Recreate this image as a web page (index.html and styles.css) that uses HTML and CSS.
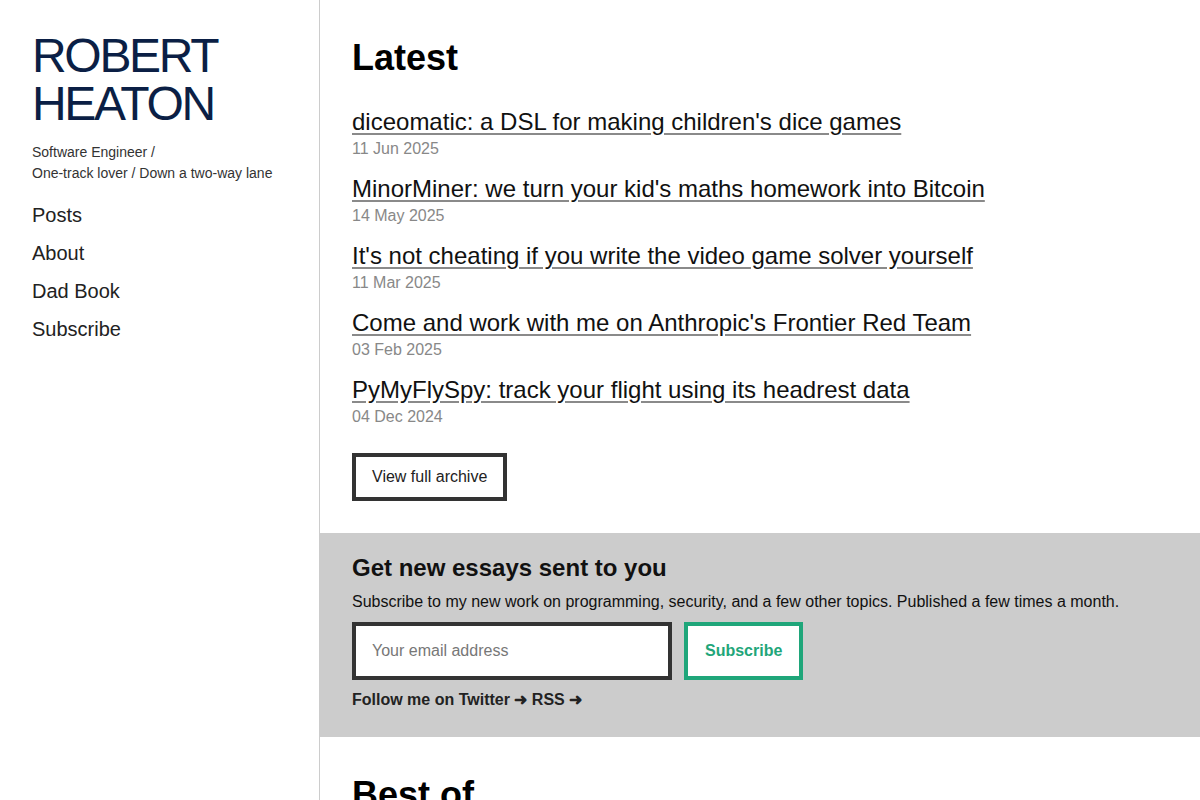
FILE: index.html
```html
<!DOCTYPE html>
<html lang="en">
<head>
    <meta charset="UTF-8">
    <meta name="viewport" content="width=device-width, initial-scale=1.0">
    <title>Robert Heaton</title>
    <link rel="stylesheet" href="styles.css">
</head>
<body>
    <div class="page">
        <aside class="sidebar">
            <a class="siteTitle" href="#">ROBERT<br>HEATON</a>
            <p class="tagline">Software Engineer /<br>One-track lover / Down a two-way lane</p>
            <nav class="siteNav">
                <a href="#">Posts</a>
                <a href="#">About</a>
                <a href="#">Dad Book</a>
                <a href="#">Subscribe</a>
            </nav>
        </aside>

        <main class="content">
            <section class="section">
                <h1>Latest</h1>
                <ul class="postList">
                    <li>
                        <a class="postLink" href="#">diceomatic: a DSL for making children's dice games</a>
                        <div class="postDate">11 Jun 2025</div>
                    </li>
                    <li>
                        <a class="postLink" href="#">MinorMiner: we turn your kid's maths homework into Bitcoin</a>
                        <div class="postDate">14 May 2025</div>
                    </li>
                    <li>
                        <a class="postLink" href="#">It's not cheating if you write the video game solver yourself</a>
                        <div class="postDate">11 Mar 2025</div>
                    </li>
                    <li>
                        <a class="postLink" href="#">Come and work with me on Anthropic's Frontier Red Team</a>
                        <div class="postDate">03 Feb 2025</div>
                    </li>
                    <li>
                        <a class="postLink" href="#">PyMyFlySpy: track your flight using its headrest data</a>
                        <div class="postDate">04 Dec 2024</div>
                    </li>
                </ul>
                <a class="archiveButton" href="#">View full archive</a>
            </section>

            <section class="signup">
                <h2>Get new essays sent to you</h2>
                <p>Subscribe to my new work on programming, security, and a few other topics. Published a few times a month.</p>
                <form class="signupForm" onsubmit="return false;">
                    <input type="email" class="emailInput" placeholder="Your email address">
                    <button type="submit" class="subscribeButton">Subscribe</button>
                </form>
                <div class="follow">
                    <a href="#">Follow me on Twitter &#10140;</a>
                    <a href="#">RSS &#10140;</a>
                </div>
            </section>

            <section class="section">
                <h1>Best of</h1>
            </section>
        </main>
    </div>
</body>
</html>
```

FILE: styles.css
```css
body {
    font-family: "Liberation Sans", Arial, sans-serif;
    margin: 0;
    padding: 0;
    background-color: #fff;
    color: #111;
}
a {
    color: inherit;
}
.page {
    display: flex;
    min-height: 100vh;
}
.sidebar {
    width: 320px;
    flex-shrink: 0;
    border-right: 1px solid #ccc;
    padding: 32px 32px;
    box-sizing: border-box;
}
.siteTitle {
    display: block;
    font-size: 48px;
    line-height: 48px;
    letter-spacing: -2.3px;
    color: #0b1f45;
    text-decoration: none;
}
.tagline {
    font-size: 14px;
    line-height: 21px;
    color: #333;
    margin: 14px 0 0 0;
}
.siteNav {
    margin-top: 12px;
}
.siteNav a {
    display: block;
    font-size: 20px;
    line-height: 38px;
    color: #222;
    text-decoration: none;
}
.content {
    flex: 1;
    min-width: 0;
}
.section {
    padding: 36px 32px 32px 32px;
}
h1 {
    font-size: 36px;
    line-height: 43px;
    margin: 0;
    color: #000;
}
.postList {
    list-style: none;
    margin: 29px 0 0 0;
    padding: 0;
}
.postList li {
    margin-bottom: 16px;
}
.postLink {
    font-size: 24px;
    line-height: 28px;
    color: #111;
    text-decoration: underline;
    text-decoration-color: #8a8a8a;
    text-underline-offset: 3px;
}
.postDate {
    font-size: 16px;
    line-height: 20px;
    margin-top: 3px;
    color: #888;
}
.archiveButton {
    display: inline-block;
    margin-top: 10px;
    border: 4px solid #333;
    padding: 11px 16px;
    font-size: 16px;
    line-height: 18px;
    color: #222;
    text-decoration: none;
}
.signup {
    background-color: #ccc;
    padding: 21px 32px 27px 32px;
}
.signup h2 {
    font-size: 24px;
    line-height: 28px;
    margin: 0;
    color: #111;
}
.signup p {
    font-size: 16px;
    line-height: 20px;
    margin: 10px 0 0 0;
    color: #111;
}
.signupForm {
    display: flex;
    gap: 12px;
    margin-top: 10px;
}
.emailInput {
    width: 320px;
    height: 58px;
    box-sizing: border-box;
    border: 4px solid #333;
    padding: 0 16px;
    font-family: inherit;
    font-size: 16px;
    background-color: #fff;
    outline: none;
}
.emailInput::placeholder {
    color: #777;
}
.subscribeButton {
    height: 58px;
    box-sizing: border-box;
    border: 4px solid #1fa67a;
    background-color: #fff;
    padding: 0 17px;
    font-family: inherit;
    font-size: 16px;
    font-weight: bold;
    color: #1fa67a;
    cursor: pointer;
}
.follow {
    margin-top: 10px;
    font-size: 16px;
    line-height: 20px;
    font-weight: bold;
}
.follow a {
    color: #222;
    text-decoration: none;
}
```
